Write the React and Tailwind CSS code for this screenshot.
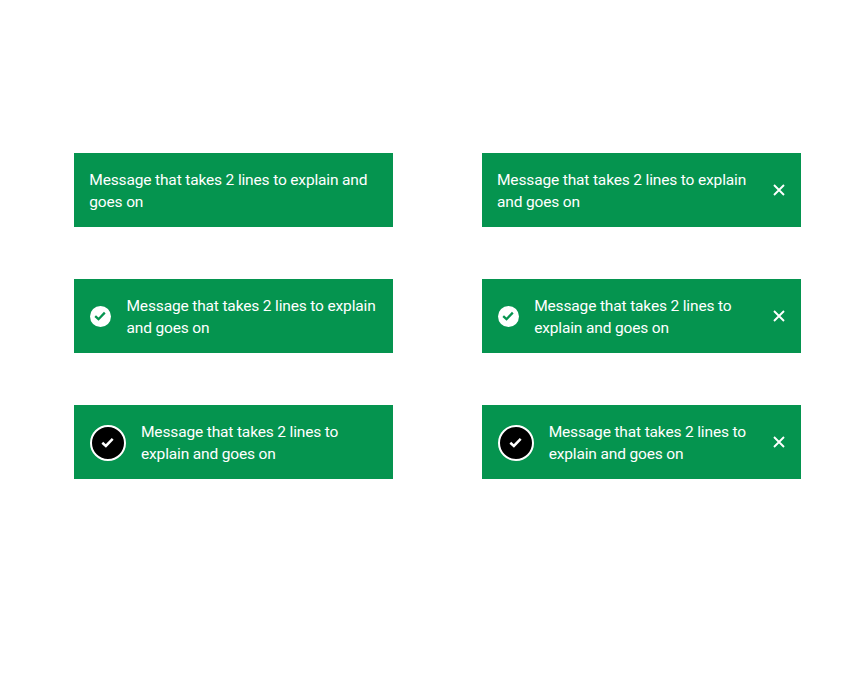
import React from "react";

const Check = ({ className }) => (
  <svg viewBox="0 0 12 10" className={className} fill="none">
    <path d="M1.2 5.2 4.5 8.2 10.8 1.6" stroke="currentColor" strokeWidth="2.3" />
  </svg>
);

const Close = () => (
  <svg viewBox="0 0 12 12" className="w-3 h-3 text-white shrink-0 ml-auto mr-[1px]" fill="none">
    <path d="M1 1 11 11M11 1 1 11" stroke="currentColor" strokeWidth="1.9" />
  </svg>
);

const SmallIcon = () => (
  <div className="w-[21px] h-[21px] ml-[0.7px] rounded-full bg-white flex items-center justify-center shrink-0 mr-[15.5px] text-[#05944f]">
    <Check className="w-[12px] h-[10px]" />
  </div>
);

const BigIcon = () => (
  <div className="w-[36px] h-[36px] ml-[0.7px] mt-[1px] rounded-full bg-black border-2 border-white flex items-center justify-center shrink-0 mr-[15px] text-white">
    <Check className="w-[13px] h-[11px]" />
  </div>
);

const Card = ({ icon, close, w }) => (
  <div className="h-[74px] bg-[#05944f] flex items-center pl-[15px] pr-[15px] text-white">
    {icon}
    <p className={`pt-[1px] text-[15.5px] leading-[22px] tracking-[-0.15px] font-['Roboto',sans-serif] ${w}`}>
      Message that takes 2 lines to explain and goes on
    </p>
    {close && <Close />}
  </div>
);

export default function App() {
  return (
    <div className="w-[861px] h-[696px] bg-white pt-[153px] pl-[74.3px]">
      <div className="grid grid-cols-[318.6px_318.6px] gap-x-[89.1px] gap-y-[52px]">
        <Card w="w-[290px]" />
        <Card close w="w-[256px]" />
        <Card icon={<SmallIcon />} w="w-[254px]" />
        <Card icon={<SmallIcon />} close w="w-[210px]" />
        <Card icon={<BigIcon />} w="w-[205px]" />
        <Card icon={<BigIcon />} close w="w-[205px]" />
      </div>
    </div>
  );
}
